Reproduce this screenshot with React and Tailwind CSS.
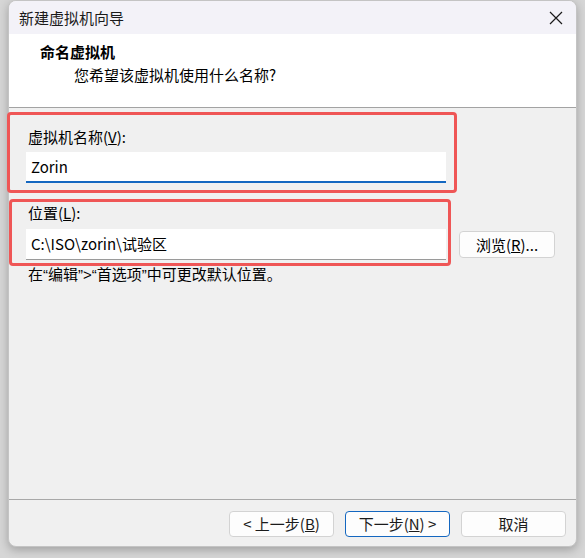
const font = { fontFamily: "'Noto Sans CJK SC', 'Liberation Sans', sans-serif" }

function CloseIcon() {
  return (
    <svg width="14" height="14" viewBox="0 0 14 14" fill="none" stroke="#1a1a1a" strokeWidth="1.2">
      <path d="M1 1l12 12M13 1L1 13" />
    </svg>
  )
}

function Button({ children, primary }) {
  return (
    <button
      className={
        primary
          ? 'w-[105px] h-[26px] rounded-[4px] bg-[#fdfdfd] border border-[#1467c0] text-[15px] leading-[20px] text-[#1b1b1b]'
          : 'w-[105px] h-[26px] rounded-[4px] bg-[#fdfdfd] border border-[#d3d3d3] text-[15px] leading-[20px] text-[#1b1b1b]'
      }
    >
      {children}
    </button>
  )
}

function Q({ children }) {
  return <span className="font-['Liberation_Sans',sans-serif]">{children}</span>
}

export default function App() {
  return (
    <div className="relative w-[585px] h-[558px] overflow-hidden bg-[#d6d6d6] pl-[8px]" style={font}>
      {/* Dialog */}
      <div className="w-[569px] h-[547px] rounded-lg bg-[#f0f0f0] border border-[#c4c4c4] overflow-hidden flex flex-col shadow-[0_3px_10px_rgba(0,0,0,0.25)]">
        {/* Title bar */}
        <div className="h-[33px] shrink-0 bg-[#f3f2f8] flex items-center pl-[10px] pr-[13px]">
          <span className="flex-1 text-[15px] leading-[20px] text-[#1b1b1b]">新建虚拟机向导</span>
          <CloseIcon />
        </div>

        {/* Header */}
        <div className="h-[74px] shrink-0 bg-white border-b border-[#a3a3a3] pt-[8px]">
          <div className="pl-[31px] text-[15px] leading-[20px] font-bold text-black">命名虚拟机</div>
          <div className="pl-[65px] mt-[3px] text-[15px] leading-[20px] text-black">您希望该虚拟机使用什么名称?</div>
        </div>

        {/* Body */}
        <div className="flex-1 px-[17px] text-[15px] leading-[20px] text-black">
          <div className="mt-[19px] pl-[2px]">
            虚拟机名称(<u>V</u>):
          </div>
          <div className="mt-[5px] w-[420px] h-[31px] bg-white border-b-2 border-[#1467c0] flex items-center pl-[5px]">
            Zorin
          </div>

          <div className="mt-[20px] pl-[2px]">
            位置(<u>L</u>):
          </div>
          <div className="mt-[6px] flex items-center gap-[13px]">
            <div className="w-[420px] h-[31px] bg-white border-b border-[#9a9a9a] flex items-center pl-[5px]">
              C:\ISO\zorin\试验区
            </div>
            <button className="w-[96px] h-[27px] rounded-[4px] bg-[#fdfdfd] border border-[#d3d3d3] text-[15px] leading-[20px]">
              浏览(<u>R</u>)...
            </button>
          </div>

          <div className="mt-[4px] pl-[2px]">
            在<Q>“</Q>编辑<Q>”&gt;“</Q>首选项<Q>”</Q>中可更改默认位置。
          </div>
        </div>

        {/* Footer */}
        <div className="h-[47px] shrink-0 border-t border-[#a8a8a8] flex justify-end items-start gap-[11px] pt-[11px] pr-[10px]">
          <Button>&lt; 上一步(<u>B</u>)</Button>
          <Button primary>下一步(<u>N</u>) &gt;</Button>
          <Button>取消</Button>
        </div>
      </div>

      {/* Red annotation boxes */}
      <div className="absolute left-[7px] top-[112px] w-[450px] h-[81px] border-[3px] border-[#ef5656] rounded-[4px]" />
      <div className="absolute left-[9px] top-[199px] w-[442px] h-[67px] border-[3px] border-[#ef5656] rounded-[4px]" />
    </div>
  )
}
